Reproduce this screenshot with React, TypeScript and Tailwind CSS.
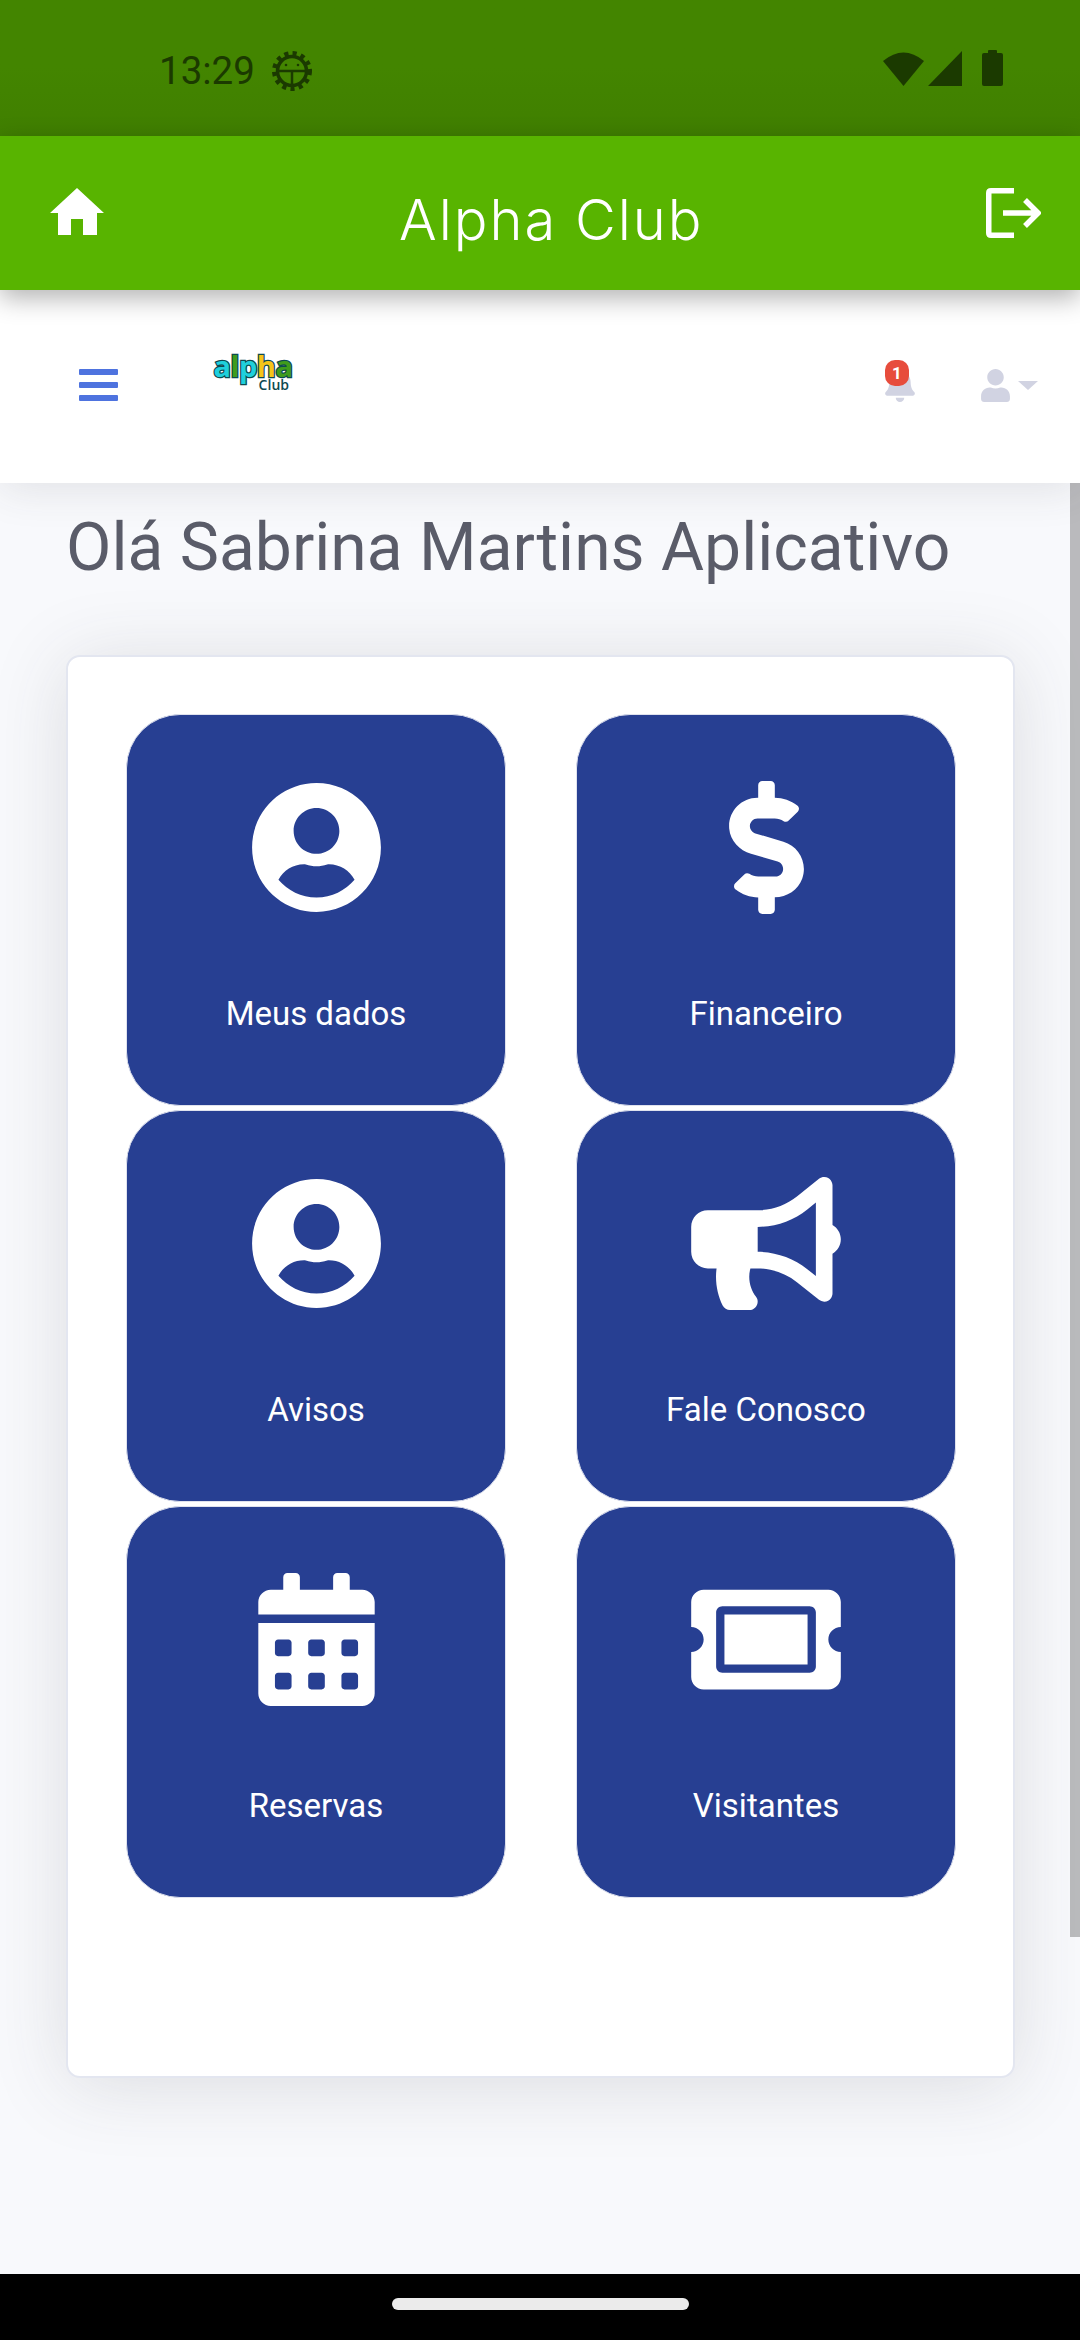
import React from "react";
import { FaUserCircle, FaDollarSign, FaBullhorn, FaCalendarAlt, FaTicketAlt, FaBell, FaUser } from "react-icons/fa";

const items = [
  { label: "Meus dados", Icon: FaUserCircle, size: "h-[133px] w-[129px]" },
  { label: "Financeiro", Icon: FaDollarSign, size: "h-[133px] w-[75px]" },
  { label: "Avisos", Icon: FaUserCircle, size: "h-[133px] w-[129px]" },
  { label: "Fale Conosco", Icon: FaBullhorn, size: "h-[133px] w-[150px]" },
  { label: "Reservas", Icon: FaCalendarAlt, size: "h-[133px] w-[117px]" },
  { label: "Visitantes", Icon: FaTicketAlt, size: "h-[133px] w-[150px]" },
];

function StatusBar() {
  return (
    <div className="flex h-[136px] shrink-0 items-center bg-gradient-to-b from-[#438500] via-[#438500] to-[#407f00] pt-[6px] text-[#1b3a00]">
      <span className="ml-[159px] font-['Roboto',sans-serif] text-[38.5px] leading-[44px]">13:29</span>
      <svg className="ml-[17px]" width="40" height="40" viewBox="0 0 40 40" fill="none" stroke="currentColor">
        <circle cx="20" cy="20" r="14.5" strokeWidth="3.5" />
        <circle cx="20" cy="20" r="17.5" strokeWidth="5" strokeDasharray="4.1 4.15" />
        <path d="M6 20H34M20 20V34" strokeWidth="2.5" />
        <circle cx="14" cy="14" r="1.3" fill="currentColor" stroke="none" />
        <circle cx="26" cy="14" r="1.3" fill="currentColor" stroke="none" />
      </svg>
      <svg className="mb-[6px] ml-auto" width="41" height="35" viewBox="0 0 41 35" fill="currentColor">
        <path d="M0 10Q20.5 -7 41 10L20.5 35Z" />
      </svg>
      <svg className="mb-[6px] ml-[4px]" width="34" height="35" viewBox="0 0 34 35" fill="currentColor">
        <path d="M34 0V35H0Z" />
      </svg>
      <svg className="mb-[6px] ml-[20px] mr-[77px]" width="21" height="36" viewBox="0 0 21 36" fill="currentColor">
        <rect x="0" y="3" width="21" height="33" rx="2" />
        <rect x="6" y="0" width="9" height="5" rx="1" />
      </svg>
    </div>
  );
}

function Header() {
  return (
    <header className="relative z-20 flex h-[154px] shrink-0 items-center bg-[#58b400] shadow-[0_8px_24px_rgba(0,0,0,0.3)]">
      <svg className="mb-[3px] ml-[50px]" width="54" height="47" viewBox="0 0 54 47" fill="white">
        <path d="M27 0L54 25H47V47H33V31H21V47H8V25H0Z" />
      </svg>
      <h1 className="ml-[295px] mt-[14px] font-['Inter',sans-serif] text-[56px] leading-[60px] font-light tracking-[2px] text-white">Alpha Club</h1>
      <svg className="ml-auto mr-[39px]" width="55" height="50" viewBox="0 0 55 50" fill="none" stroke="white" strokeWidth="5.5">
        <path d="M28 2.750H5Q2.750 2.750 2.750 5V45Q2.750 47.250 5 47.250H28" />
        <path d="M17 25H51M39 12L52 25L39 38" />
      </svg>
    </header>
  );
}

function Logo() {
  return (
    <div className="mb-[26px] ml-[97px] flex h-[38px] w-[76px] flex-col items-center font-['Open_Sans',sans-serif] font-bold">
      <span className="text-[29px] leading-[25px] tracking-[-0.5px] [-webkit-text-stroke:2.5px_#0e4a4f] [paint-order:stroke]">
        <span className="text-[#1fd0dc]">a</span>
        <span className="text-[#3f9c1c]">l</span>
        <span className="text-[#1fd0dc]">p</span>
        <span className="text-[#f5c518]">h</span>
        <span className="text-[#3f9c1c]">a</span>
      </span>
      <span className="self-end pr-[2px] text-[14px] leading-[13px] font-semibold text-[#0e4a4f]">Club</span>
    </div>
  );
}

function Nav() {
  return (
    <nav className="relative z-10 flex h-[193px] shrink-0 items-center bg-white pb-[3px] shadow-[0_6px_40px_rgba(58,59,69,0.12)]">
      <div className="ml-[79px] flex w-[39px] flex-col gap-[7px]">
        <span className="h-[6px] rounded-[1px] bg-[#4e73df]" />
        <span className="h-[6px] rounded-[1px] bg-[#4e73df]" />
        <span className="h-[6px] rounded-[1px] bg-[#4e73df]" />
      </div>
      <Logo />
      <div className="relative ml-auto">
        <FaBell className="block h-[34px] w-[30px] text-[#d1d3e2]" />
        <span className="absolute left-0 top-[-8px] flex h-[26px] w-[24px] items-center justify-center rounded-[10px] bg-[#e74c3c] font-['Roboto',sans-serif] text-[17px] leading-none font-bold text-white">1</span>
      </div>
      <FaUser className="ml-[66px] h-[33px] w-[29px] text-[#d1d3e2]" />
      <svg className="ml-[8px] mr-[42px]" width="20" height="9" viewBox="0 0 20 9" fill="#d1d3e2">
        <path d="M0 0H20L10 9Z" />
      </svg>
    </nav>
  );
}

function Tile({ label, Icon, size }: { label: string; Icon: React.ComponentType<{ className?: string }>; size: string }) {
  return (
    <a className="flex h-[392px] flex-col items-center rounded-[54px] border border-[#dfe2ee] bg-[#273f92] pt-[66px] text-white">
      <Icon className={`${size} shrink-0`} />
      <span className="mt-[77px] font-['Roboto',sans-serif] text-[33px] leading-[46px]">{label}</span>
    </a>
  );
}

export default function App() {
  return (
    <div className="relative flex h-[2340px] w-[1080px] flex-col overflow-hidden bg-[#f8f9fc]">
      <StatusBar />
      <Header />
      <Nav />
      <main className="flex-1 pl-[66px] pr-[65px]">
        <h2 className="mt-[29px] font-['Roboto',sans-serif] text-[66px] leading-[72px] font-normal whitespace-nowrap text-[#5a5c69]">Olá Sabrina Martins Aplicativo</h2>
        <section className="mt-[71px] h-[1423px] rounded-[14px] border-2 border-[#e3e6f0] bg-white px-[58px] pt-[57px] shadow-[0_7px_77px_rgba(58,59,69,0.15)]">
          <div className="grid grid-cols-[380px_380px] gap-x-[70px] gap-y-[4px]">
            {items.map((it) => (
              <Tile key={it.label} label={it.label} Icon={it.Icon} size={it.size} />
            ))}
          </div>
        </section>
      </main>
      <footer className="relative z-10 flex h-[66px] shrink-0 items-center justify-center bg-black">
        <span className="mb-[6px] h-[12px] w-[297px] rounded-full bg-[#ebebeb]" />
      </footer>
      <div className="absolute right-0 top-[290px] h-[1647px] w-[10px] bg-black/25" />
    </div>
  );
}
